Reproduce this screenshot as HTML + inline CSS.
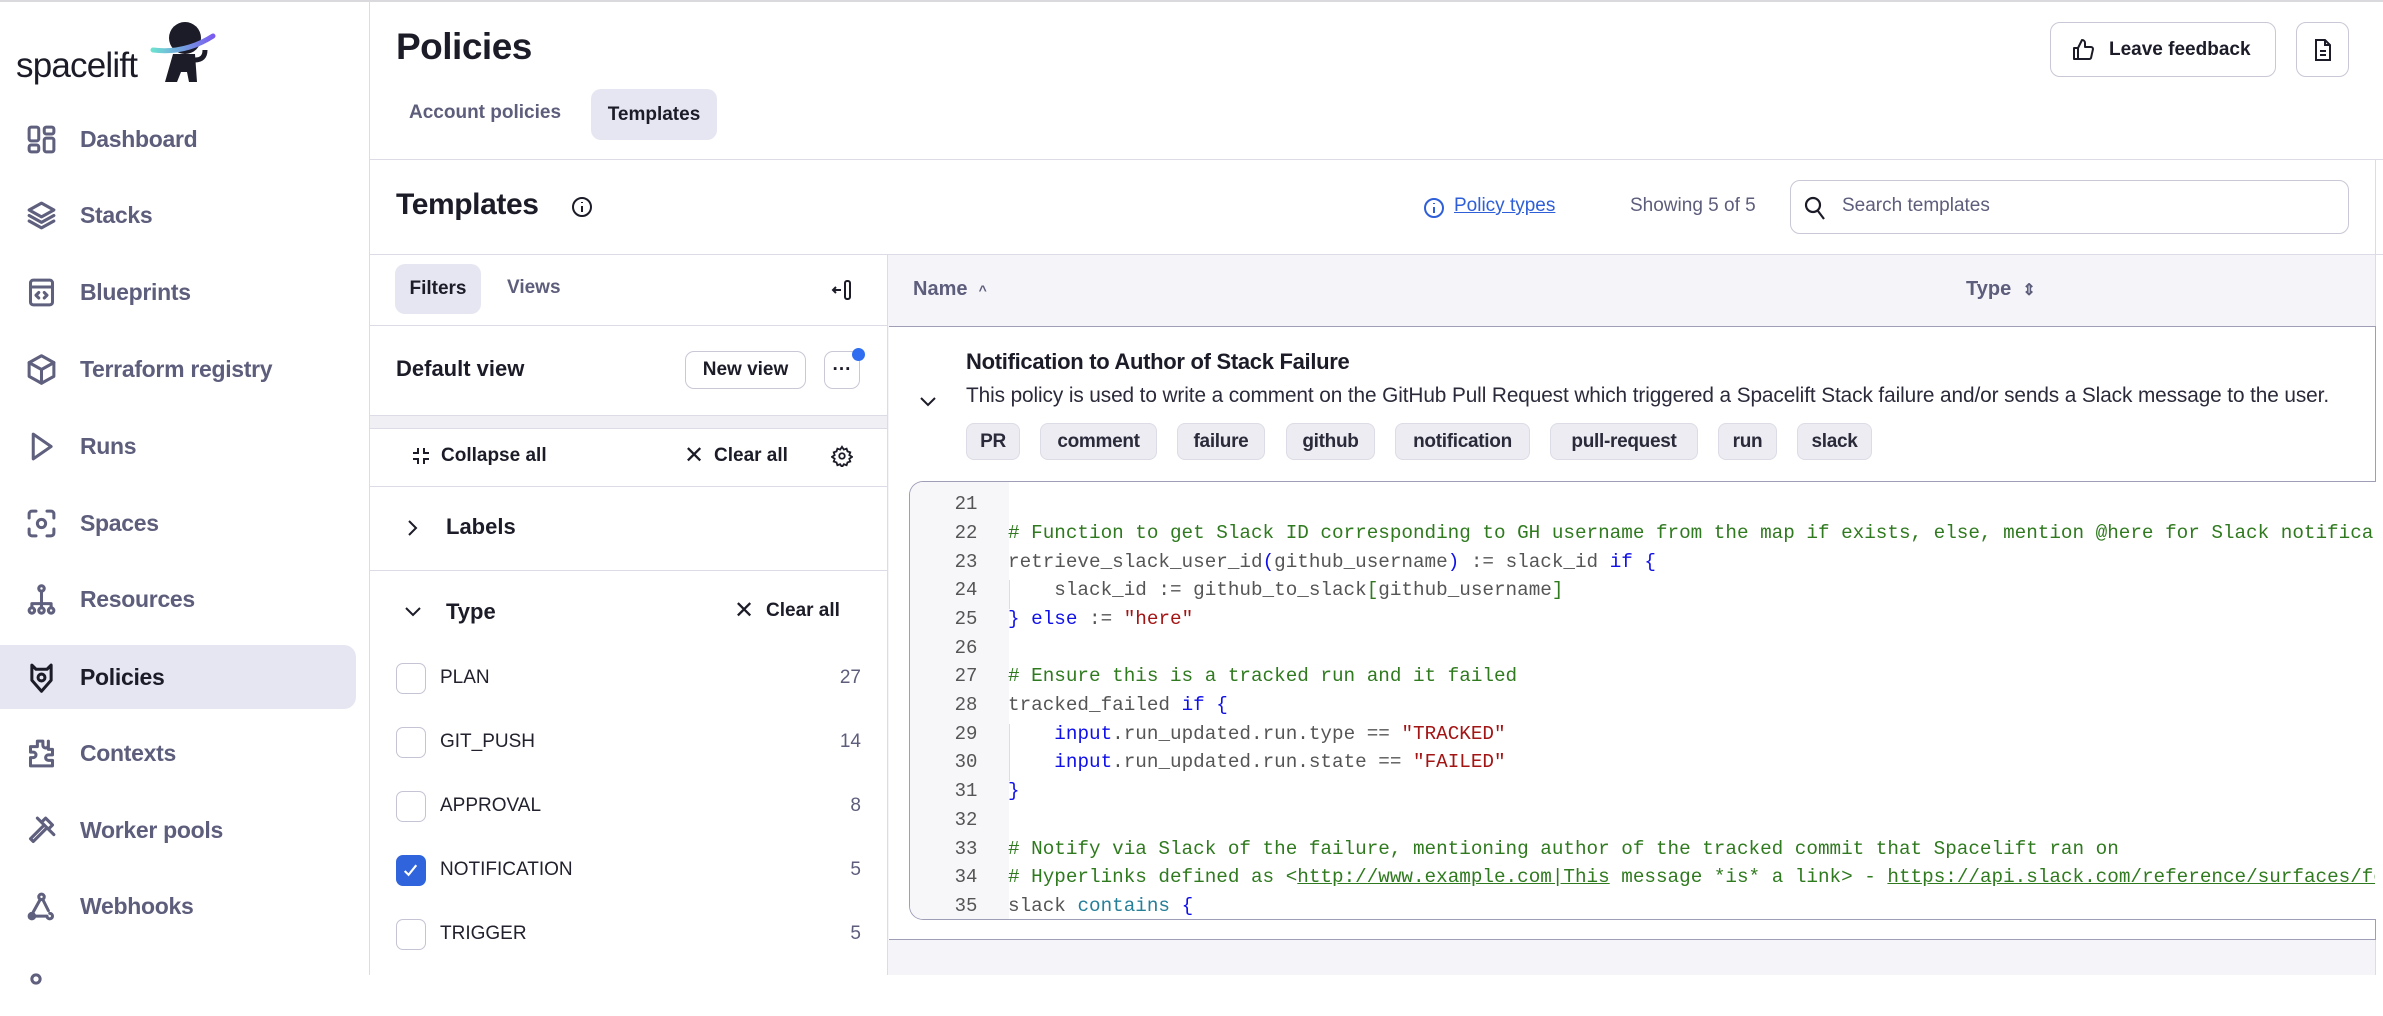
<!DOCTYPE html>
<html><head><meta charset="utf-8"><style>
*{box-sizing:border-box;margin:0;padding:0}
body{width:2383px;height:973px;overflow:hidden;background:#fff;font-family:"Liberation Sans",sans-serif;color:#1c1c28;position:relative;border-top:2px solid #d9d9de}
.a{position:absolute;white-space:nowrap}
.nav{position:absolute;left:0;width:356px;height:64px;display:flex;align-items:center;font-size:23px;font-weight:700;color:#5d5d7c;letter-spacing:-0.3px}
.nav svg{position:absolute;left:25px;width:33px;height:33px;fill:none;stroke:#5f5f7e;stroke-width:2.2;stroke-linecap:round;stroke-linejoin:round}
.nav span{position:absolute;left:80px}
.tag{position:absolute;top:421px;height:37px;border:1px solid #dcdce6;background:#ececf2;border-radius:8px;font-size:19px;font-weight:700;color:#2a2a3a;display:flex;align-items:center;justify-content:center;letter-spacing:-0.3px}
.cb{position:absolute;left:396px;width:30px;height:31px;border:1.5px solid #c4c4d4;border-radius:7px;background:#fff}
.fl{position:absolute;left:440px;font-size:19px;color:#22222e}
.fc{position:absolute;right:1522px;font-size:19px;color:#5d5d7c}
.ln{position:absolute;left:909px;width:99px;text-align:center;font-family:"Liberation Mono",monospace;font-size:19px;color:#555;padding-left:15px}
.cd{position:absolute;left:1008px;font-family:"Liberation Mono",monospace;font-size:19.3px;color:#555;white-space:pre}
.c{color:#2f7a1f}.k{color:#1010e8}.s{color:#a31515}.t{color:#267f99}
.u{text-decoration:underline}
</style></head><body>
<!-- sidebar -->
<div class="a" style="left:0;top:0;width:370px;height:973px;border-right:1px solid #dcdce6;background:#fff"></div>
<div class="a" style="left:16px;top:44px;font-size:35px;font-weight:400;color:#1c1c28;letter-spacing:-0.8px">spacelift</div>
<svg class="a" style="left:145px;top:12px" width="75" height="70" viewBox="0 0 75 70">
<defs><linearGradient id="g" x1="0" x2="1"><stop offset="0" stop-color="#6de0d0"/><stop offset="1" stop-color="#7a5cf0"/></linearGradient></defs>
<circle cx="40" cy="24" r="16" fill="#1c1c28"/>
<path d="M8 36 Q40 40 68 22" fill="none" stroke="url(#g)" stroke-width="5" stroke-linecap="round"/>
<path d="M20 68 L28 40 L50 40 L52 68 L44 68 L42 58 L36 58 L32 68 Z" fill="#1c1c28"/>
<path d="M50 46 Q60 46 60 36" stroke="#1c1c28" stroke-width="5" fill="none"/>
</svg>
<div class="nav" style="top:105px"><svg viewBox="0 0 24 24"><rect x="3" y="3" width="7" height="10" rx="1.5"/><rect x="14" y="3" width="7" height="5" rx="1.5"/><rect x="3" y="16" width="7" height="5" rx="1.5"/><rect x="14" y="11" width="7" height="10" rx="1.5"/></svg><span>Dashboard</span></div>
<div class="nav" style="top:181px"><svg viewBox="0 0 24 24"><path d="M12 3l9 5-9 5-9-5z"/><path d="M3 12l9 5 9-5"/><path d="M3 16l9 5 9-5"/></svg><span>Stacks</span></div>
<div class="nav" style="top:258px"><svg viewBox="0 0 24 24"><rect x="4" y="3" width="16" height="18" rx="2"/><path d="M4 8h16M10 12l-2 2 2 2M14 12l2 2-2 2"/></svg><span>Blueprints</span></div>
<div class="nav" style="top:335px"><svg viewBox="0 0 24 24"><path d="M12 2l9 5v10l-9 5-9-5V7z"/><path d="M3 7l9 5 9-5M12 12v10"/></svg><span>Terraform registry</span></div>
<div class="nav" style="top:412px"><svg viewBox="0 0 24 24"><path d="M6 3l13 9-13 9z"/></svg><span>Runs</span></div>
<div class="nav" style="top:489px"><svg viewBox="0 0 24 24"><path d="M3 8V5a2 2 0 012-2h3M16 3h3a2 2 0 012 2v3M21 16v3a2 2 0 01-2 2h-3M8 21H5a2 2 0 01-2-2v-3"/><circle cx="12" cy="12" r="3"/></svg><span>Spaces</span></div>
<div class="nav" style="top:565px"><svg viewBox="0 0 24 24"><circle cx="12" cy="4" r="2"/><path d="M12 6v6M5 18v-3h14v3M12 12v6"/><circle cx="5" cy="20" r="2"/><circle cx="12" cy="20" r="2"/><circle cx="19" cy="20" r="2"/></svg><span>Resources</span></div>
<div class="a" style="left:0;top:643px;width:356px;height:64px;background:#e6e6f2;border-radius:0 12px 12px 0"></div>
<div class="nav" style="top:643px;color:#1c1c28"><svg viewBox="0 0 24 24" style="stroke:#1c1c28"><path d="M5 3l3 3h8l3-3v11l-7 8-7-8z"/><circle cx="12" cy="12" r="2.5"/></svg><span>Policies</span></div>
<div class="nav" style="top:719px"><svg viewBox="0 0 24 24"><path d="M9 3h4v3a2 2 0 104 0V3h0v6h3v4h-3a2 2 0 100 4h3v4H4v-6h2a2 2 0 100-4H4V7h5z"/></svg><span>Contexts</span></div>
<div class="nav" style="top:796px"><svg viewBox="0 0 24 24"><path d="M15 3l5 5-3 3-5-5zM13 9L4 18l2 2 9-9M9 3l12 12"/></svg><span>Worker pools</span></div>
<div class="nav" style="top:872px"><svg viewBox="0 0 24 24"><circle cx="12" cy="5" r="2"/><path d="M11 7l-5 9M13 7l4 8M4 19h12M18 17a2 2 0 11-2 2"/><circle cx="5" cy="19" r="2"/></svg><span>Webhooks</span></div>
<div class="nav" style="top:950px"><svg viewBox="0 0 24 24"><circle cx="8" cy="8" r="3"/></svg><span></span></div>

<!-- header -->
<div class="a" style="left:396px;top:24px;font-size:37px;font-weight:700;letter-spacing:-0.5px">Policies</div>
<div class="a" style="left:409px;top:100px;font-size:19px;font-weight:700;color:#5d5d7c">Account policies</div>
<div class="a" style="left:591px;top:87px;width:126px;height:51px;background:#e6e6f2;border-radius:10px;font-size:19px;font-weight:700;display:flex;align-items:center;justify-content:center">Templates</div>
<div class="a" style="left:2050px;top:20px;width:226px;height:55px;border:1.5px solid #c8c8d6;border-radius:10px;display:flex;align-items:center;font-size:19px;font-weight:700">
<svg style="margin-left:20px;margin-right:14px" width="24" height="26" viewBox="0 0 24 24" fill="none" stroke="#1c1c28" stroke-width="2" stroke-linejoin="round"><path d="M7 10v11H3V10zM7 10l4-8a3 3 0 013 3v4h6a2 2 0 012 2l-2 9a2 2 0 01-2 1H7"/></svg>Leave feedback</div>
<div class="a" style="left:2296px;top:20px;width:53px;height:55px;border:1.5px solid #c8c8d6;border-radius:10px;display:flex;align-items:center;justify-content:center">
<svg width="20" height="24" viewBox="0 0 20 24" fill="none" stroke="#1c1c28" stroke-width="2"><path d="M3 2h9l5 5v15H3zM12 2v5h5M7 13h6M7 17h6"/></svg></div>
<div class="a" style="left:370px;top:157px;width:2013px;height:1px;background:#dcdce6"></div>

<div class="a" style="left:396px;top:186px;font-size:30px;font-weight:700;letter-spacing:-0.4px">Templates</div>
<svg class="a" style="left:571px;top:194px" width="22" height="22" viewBox="0 0 22 22" fill="none" stroke="#1c1c28" stroke-width="2"><circle cx="11" cy="11" r="9"/><path d="M11 10v6M11 6v1"/></svg>
<svg class="a" style="left:1423px;top:195px" width="22" height="22" viewBox="0 0 22 22" fill="none" stroke="#2f5fd8" stroke-width="2"><circle cx="11" cy="11" r="9"/><path d="M11 10v6M11 6v1"/></svg>
<div class="a u" style="left:1454px;top:193px;font-size:19px;color:#2f5fd8">Policy types</div>
<div class="a" style="left:1630px;top:193px;font-size:19px;color:#5d5d7c">Showing 5 of 5</div>
<div class="a" style="left:1790px;top:178px;width:559px;height:54px;border:1.5px solid #c8c8d6;border-radius:10px"></div>
<svg class="a" style="left:1803px;top:193px" width="24" height="26" viewBox="0 0 24 26" fill="none" stroke="#1c1c28" stroke-width="2.2"><circle cx="10" cy="10" r="7"/><path d="M15 16l6 8"/></svg>
<div class="a" style="left:1842px;top:193px;font-size:19px;color:#5d5d7c">Search templates</div>
<div class="a" style="left:370px;top:252px;width:2013px;height:1px;background:#dcdce6"></div>

<!-- filters panel -->
<div class="a" style="left:395px;top:262px;width:86px;height:50px;background:#e6e6f2;border-radius:10px;font-size:19px;font-weight:700;display:flex;align-items:center;justify-content:center">Filters</div>
<div class="a" style="left:507px;top:275px;font-size:19px;color:#5d5d7c;font-weight:700">Views</div>
<svg class="a" style="left:830px;top:276px" width="24" height="24" viewBox="0 0 24 24" fill="none" stroke="#1c1c28" stroke-width="2"><rect x="15" y="3" width="5" height="18" rx="2"/><path d="M3 12h8M6 9l-3 3 3 3"/></svg>
<div class="a" style="left:370px;top:323px;width:517px;height:1px;background:#dcdce6"></div>
<div class="a" style="left:396px;top:354px;font-size:22px;font-weight:700">Default view</div>
<div class="a" style="left:685px;top:349px;width:121px;height:38px;border:1.5px solid #c8c8d6;border-radius:9px;font-size:19px;font-weight:700;display:flex;align-items:center;justify-content:center">New view</div>
<div class="a" style="left:824px;top:349px;width:36px;height:38px;border:1.5px solid #c8c8d6;border-radius:9px;font-size:19px;font-weight:700;display:flex;align-items:center;justify-content:center">···</div>
<div class="a" style="left:852px;top:346px;width:13px;height:13px;border-radius:50%;background:#2f6ef0"></div>
<div class="a" style="left:370px;top:413px;width:517px;height:14px;background:#efeff4;border-top:1px solid #dcdce6;border-bottom:1px solid #dcdce6"></div>
<svg class="a" style="left:410px;top:443px" width="22" height="22" viewBox="0 0 22 22" fill="none" stroke="#1c1c28" stroke-width="2"><path d="M3 8h5V3M14 3v5h5M3 14h5v5M14 19v-5h5"/></svg>
<div class="a" style="left:441px;top:443px;font-size:19px;font-weight:700">Collapse all</div>
<div class="a" style="left:684px;top:439px;font-size:24px;">✕</div>
<div class="a" style="left:714px;top:443px;font-size:19px;font-weight:700">Clear all</div>
<svg class="a" style="left:831px;top:443px" width="22" height="22" viewBox="0 0 24 24" fill="none" stroke="#1c1c28" stroke-width="2"><circle cx="12" cy="12" r="3"/><path d="M12 2l2 3 3-1 1 3 3 1-1 3 3 2-3 2 1 3-3 1-1 3-3-1-2 3-2-3-3 1-1-3-3-1 1-3-3-2 3-2-1-3 3-1 1-3 3 1z"/></svg>
<div class="a" style="left:370px;top:484px;width:517px;height:1px;background:#dcdce6"></div>
<svg class="a" style="left:404px;top:515px" width="16" height="22" viewBox="0 0 16 22" fill="none" stroke="#1c1c28" stroke-width="2"><path d="M5 4l7 7-7 7"/></svg>
<div class="a" style="left:446px;top:512px;font-size:22px;font-weight:700">Labels</div>
<div class="a" style="left:370px;top:568px;width:517px;height:1px;background:#dcdce6"></div>
<svg class="a" style="left:402px;top:602px" width="22" height="16" viewBox="0 0 22 16" fill="none" stroke="#1c1c28" stroke-width="2"><path d="M4 4l7 7 7-7"/></svg>
<div class="a" style="left:446px;top:597px;font-size:22px;font-weight:700">Type</div>
<div class="a" style="left:734px;top:594px;font-size:24px;">✕</div>
<div class="a" style="left:766px;top:598px;font-size:19px;font-weight:700">Clear all</div>
<div class="cb" style="top:661px"></div><div class="fl a" style="top:665px">PLAN</div><div class="fc a" style="top:665px">27</div>
<div class="cb" style="top:725px"></div><div class="fl a" style="top:729px">GIT_PUSH</div><div class="fc a" style="top:729px">14</div>
<div class="cb" style="top:789px"></div><div class="fl a" style="top:793px">APPROVAL</div><div class="fc a" style="top:793px">8</div>
<div class="cb" style="top:853px;background:#2f64dc;border-color:#2f64dc"><svg width="27" height="28" viewBox="0 0 28 28" fill="none" stroke="#fff" stroke-width="2.2"><path d="M8 15l4 4 8-10"/></svg></div><div class="fl a" style="top:857px">NOTIFICATION</div><div class="fc a" style="top:857px">5</div>
<div class="cb" style="top:917px"></div><div class="fl a" style="top:921px">TRIGGER</div><div class="fc a" style="top:921px">5</div>

<!-- table -->
<div class="a" style="left:887px;top:252px;width:1px;height:721px;background:#dcdce6"></div>
<div class="a" style="left:888px;top:253px;width:1488px;height:720px;background:#f4f4f9"></div>
<div class="a" style="left:2375px;top:157px;width:1px;height:816px;background:#dcdce6"></div>
<div class="a" style="left:913px;top:276px;font-size:20px;font-weight:700;color:#5d5d7c">Name&nbsp; <span style="font-size:14px">^</span></div>
<div class="a" style="left:1966px;top:276px;font-size:20px;font-weight:700;color:#5d5d7c">Type&nbsp; <span style="font-size:16px">⇕</span></div>
<div class="a" style="left:889px;top:324px;width:1487px;height:614px;background:#fff;border-top:1.5px solid #9e9eb6;border-bottom:1.5px solid #9e9eb6;border-right:1.5px solid #9e9eb6"></div>
<svg class="a" style="left:918px;top:393px" width="20" height="14" viewBox="0 0 20 14" fill="none" stroke="#1c1c28" stroke-width="2"><path d="M3 3l7 7 7-7"/></svg>
<div class="a" style="left:966px;top:347px;font-size:22px;font-weight:700;letter-spacing:-0.3px">Notification to Author of Stack Failure</div>
<div class="a" style="left:966px;top:382px;font-size:20.8px;color:#2a2a3a;letter-spacing:-0.1px">This policy is used to write a comment on the GitHub Pull Request which triggered a Spacelift Stack failure and/or sends a Slack message to the user.</div>
<div class="tag" style="left:966px;width:54px">PR</div>
<div class="tag" style="left:1040px;width:117px">comment</div>
<div class="tag" style="left:1177px;width:88px">failure</div>
<div class="tag" style="left:1286px;width:89px">github</div>
<div class="tag" style="left:1395px;width:135px">notification</div>
<div class="tag" style="left:1550px;width:148px">pull-request</div>
<div class="tag" style="left:1718px;width:59px">run</div>
<div class="tag" style="left:1797px;width:75px">slack</div>
<div class="a" style="left:909px;top:479px;width:1467px;height:439px;border:1.5px solid #9e9eb6;border-right:none;border-radius:14px 0 0 14px;background:#fff;overflow:hidden">
 <div style="position:absolute;left:0;top:0;width:99px;height:100%;background:#f7f7fa"></div>
 <div style="position:absolute;left:99px;top:98px;width:1px;height:29px;background:#ddd"></div>
 <div style="position:absolute;left:99px;top:242px;width:1px;height:57px;background:#ddd"></div>
</div>
<div class="ln" style="top:491px">21</div><div class="ln" style="top:520px">22</div><div class="ln" style="top:549px">23</div><div class="ln" style="top:577px">24</div><div class="ln" style="top:606px">25</div><div class="ln" style="top:635px">26</div><div class="ln" style="top:663px">27</div><div class="ln" style="top:692px">28</div><div class="ln" style="top:721px">29</div><div class="ln" style="top:749px">30</div><div class="ln" style="top:778px">31</div><div class="ln" style="top:807px">32</div><div class="ln" style="top:836px">33</div><div class="ln" style="top:864px">34</div><div class="ln" style="top:893px">35</div>
<div class="a" style="left:1008px;top:480px;width:1367px;height:437px;overflow:hidden">
<div class="cd" style="left:0;top:40px"><span class="c"># Function to get Slack ID corresponding to GH username from the map if exists, else, mention @here for Slack notifications</span></div>
<div class="cd" style="left:0;top:69px">retrieve_slack_user_id<span class="k">(</span>github_username<span class="k">)</span> := slack_id <span class="k">if {</span></div>
<div class="cd" style="left:0;top:97px">    slack_id := github_to_slack<span class="c">[</span>github_username<span class="c">]</span></div>
<div class="cd" style="left:0;top:126px"><span class="k">} else</span> := <span class="s">"here"</span></div>
<div class="cd" style="left:0;top:183px"><span class="c"># Ensure this is a tracked run and it failed</span></div>
<div class="cd" style="left:0;top:212px">tracked_failed <span class="k">if {</span></div>
<div class="cd" style="left:0;top:241px">    <span class="k">input</span>.run_updated.run.type == <span class="s">"TRACKED"</span></div>
<div class="cd" style="left:0;top:269px">    <span class="k">input</span>.run_updated.run.state == <span class="s">"FAILED"</span></div>
<div class="cd" style="left:0;top:298px"><span class="k">}</span></div>
<div class="cd" style="left:0;top:356px"><span class="c"># Notify via Slack of the failure, mentioning author of the tracked commit that Spacelift ran on</span></div>
<div class="cd" style="left:0;top:384px"><span class="c"># Hyperlinks defined as &lt;<span class="u">http://www.example.com|This</span> message *is* a link&gt; - <span class="u">https://api.slack.com/reference/surfaces/formatting</span></span></div>
<div class="cd" style="left:0;top:413px">slack <span class="t">contains</span> <span class="k">{</span></div>
</div>
</body></html>
